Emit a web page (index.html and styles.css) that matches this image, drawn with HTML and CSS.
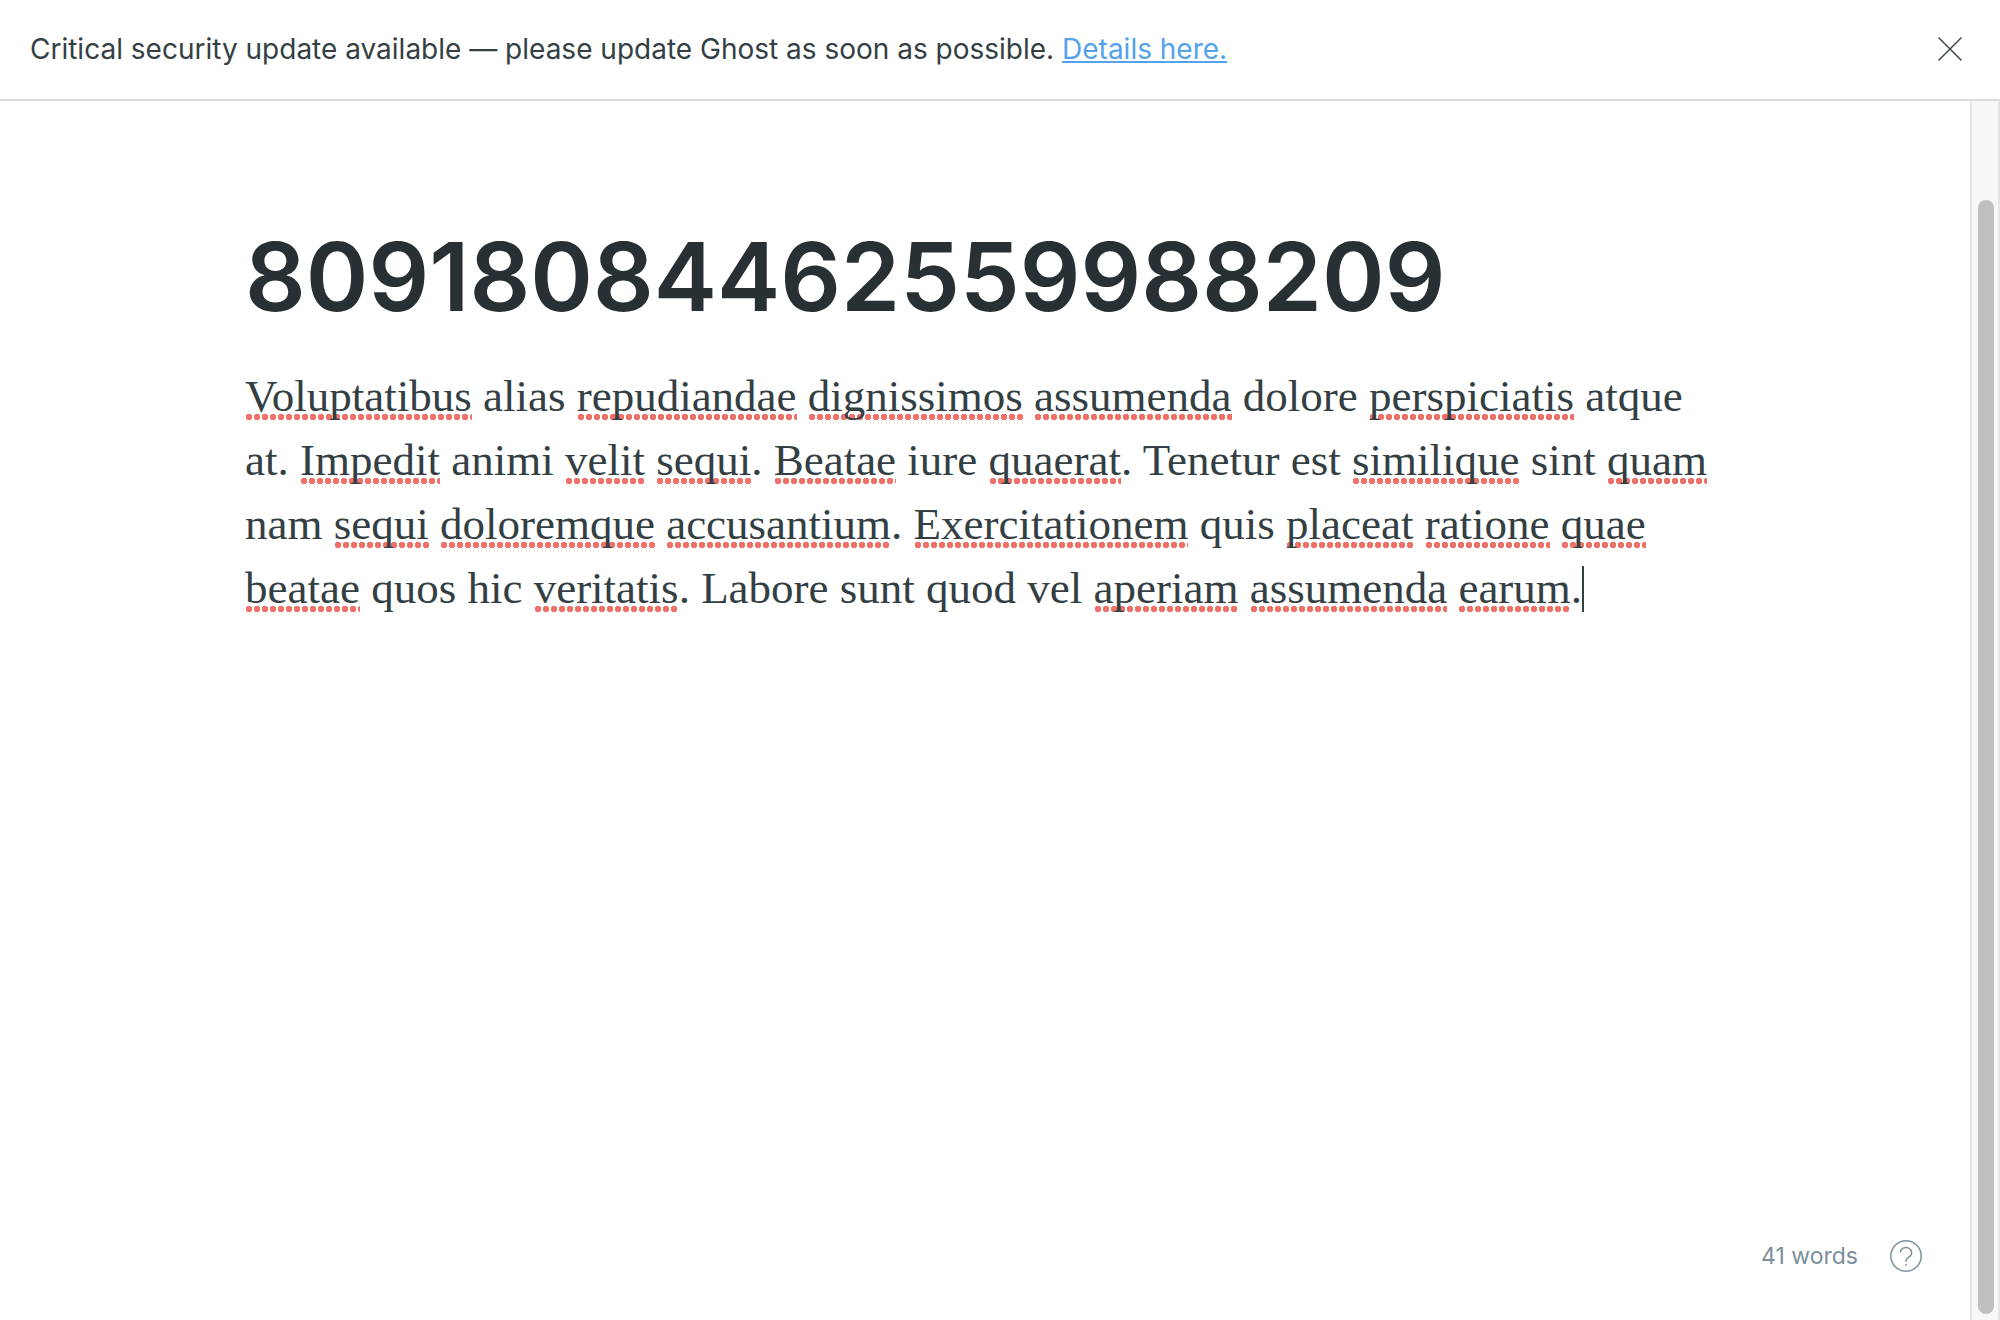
FILE: index.html
```html
<!DOCTYPE html>
<html lang="en">
<head>
  <meta charset="utf-8">
  <meta name="viewport" content="width=device-width, initial-scale=1">
  <title>Editor - Ghost</title>
  <link rel="stylesheet" href="styles.css">
</head>
<body>
  <div class="app">
    <header class="alert">
      <p class="alert-text">Critical security update available — please update Ghost as soon as possible. <a class="alert-link" href="#details">Details here.</a></p>
      <button class="alert-close" type="button" aria-label="Close">
        <svg class="alert-icon" viewBox="0 0 24 24" aria-hidden="true"><path d="M0.5 0.5l23 23M23.5 0.5l-23 23"/></svg>
      </button>
    </header>
    <div class="workspace">
      <main class="editor">
        <input class="title" type="text" aria-label="Post title" spellcheck="false" value="80918084462559988209">
        <div class="content" role="textbox" aria-multiline="true" aria-label="Post content" contenteditable="true" spellcheck="false"><p class="paragraph"><span class="typo">Voluptatibus</span> alias <span class="typo">repudiandae</span> <span class="typo">dignissimos</span> <span class="typo">assumenda</span> dolore <span class="typo">perspiciatis</span> atque<br>at. <span class="typo">Impedit</span> animi <span class="typo">velit</span> <span class="typo">sequi</span>. <span class="typo">Beatae</span> iure <span class="typo">quaerat</span>. Tenetur est <span class="typo">similique</span> sint <span class="typo">quam</span><br>nam <span class="typo">sequi</span> <span class="typo">doloremque</span> <span class="typo">accusantium</span>. <span class="typo">Exercitationem</span> quis <span class="typo">placeat</span> <span class="typo">ratione</span> <span class="typo">quae</span><br><span class="typo">beatae</span> quos hic <span class="typo">veritatis</span>. Labore sunt quod vel <span class="typo">aperiam</span> <span class="typo">assumenda</span> <span class="typo">earum</span>.<span class="caret"></span></p></div>
        <footer class="status">
          <span class="word-count">41 words</span>
          <a class="help" href="#help" aria-label="Markdown help">
            <svg class="help-icon" viewBox="0 0 32 32" aria-hidden="true"><circle cx="16" cy="16" r="15.2"/><path d="M10.4 12.6a5.6 5.1 0 1 1 8.6 4.3c-1.9 1.2-3 1.8-3 3.6v1.3"/><path d="M16 24v1.8"/></svg>
          </a>
        </footer>
      </main>
      <div class="scroll-rail"><div class="scroll-thumb"></div></div>
    </div>
  </div>
</body>
</html>
```
FILE: styles.css
```css
* {
  box-sizing: border-box;
}

body {
  margin: 0;
  background: #fff;
  color: #343f44;
  font-family: Inter, "Liberation Sans", sans-serif;
}

.app {
  display: flex;
  flex-direction: column;
  min-height: 100vh;
}

.alert {
  display: flex;
  align-items: center;
  justify-content: space-between;
  padding: 29px 30px 30px;
  border-bottom: 2px solid #dadcdc;
}

.alert-text {
  margin: 0;
  font-size: 28px;
  line-height: 36px;
}

.alert-link {
  color: #54a3ea;
  text-decoration: underline;
  text-decoration-thickness: 2px;
  text-decoration-skip-ink: none;
  text-underline-offset: 2px;
}

.alert-close {
  display: flex;
  padding: 8px;
  border: 0;
  background: none;
}

.alert-icon {
  width: 24px;
  height: 24px;
  fill: none;
  stroke: #343f44;
  stroke-width: 1.4;
}

.workspace {
  display: flex;
  flex: 1;
}

.editor {
  display: flex;
  flex: 1;
  flex-direction: column;
}

.title,
.content {
  width: 100%;
  max-width: 1480px;
  margin: 0 auto;
}

.title {
  height: 112px;
  margin-top: 119px;
  padding: 0;
  border: 0;
  outline: 0;
  background: none;
  color: #283034;
  font-family: inherit;
  font-size: 95px;
  font-weight: 600;
}

.content {
  flex: 1;
  padding-top: 32px;
  outline: 0;
}

.paragraph {
  margin: 0;
  font-family: Georgia, "Liberation Serif", serif;
  font-size: 45px;
  line-height: 64px;
}

.typo {
  background: radial-gradient(circle, #f0716a 2px, #f0716a 3px, transparent 3px) left 0 bottom 1px / 8px 6px repeat-x;
}

.caret {
  display: inline-block;
  width: 2px;
  height: 46px;
  margin: -8px 0;
  background: #343f44;
  vertical-align: -1px;
}

.status {
  display: flex;
  align-items: center;
  justify-content: flex-end;
  gap: 32px;
  padding: 24px 48px 48px;
  color: #7c8f9b;
  font-size: 23px;
  line-height: 32px;
}

.help {
  display: flex;
}

.help-icon {
  width: 32px;
  height: 32px;
  fill: none;
  stroke: #7c8f9b;
  stroke-width: 1.5;
}

.scroll-rail {
  display: flex;
  width: 30px;
  padding: 99px 4px 6px 6px;
  border: solid #e6e6e6;
  border-width: 0 2px;
  background: #f8f8f8;
}

.scroll-thumb {
  flex: 1;
  border-radius: 8px;
  background: #c0c0c0;
}
```
